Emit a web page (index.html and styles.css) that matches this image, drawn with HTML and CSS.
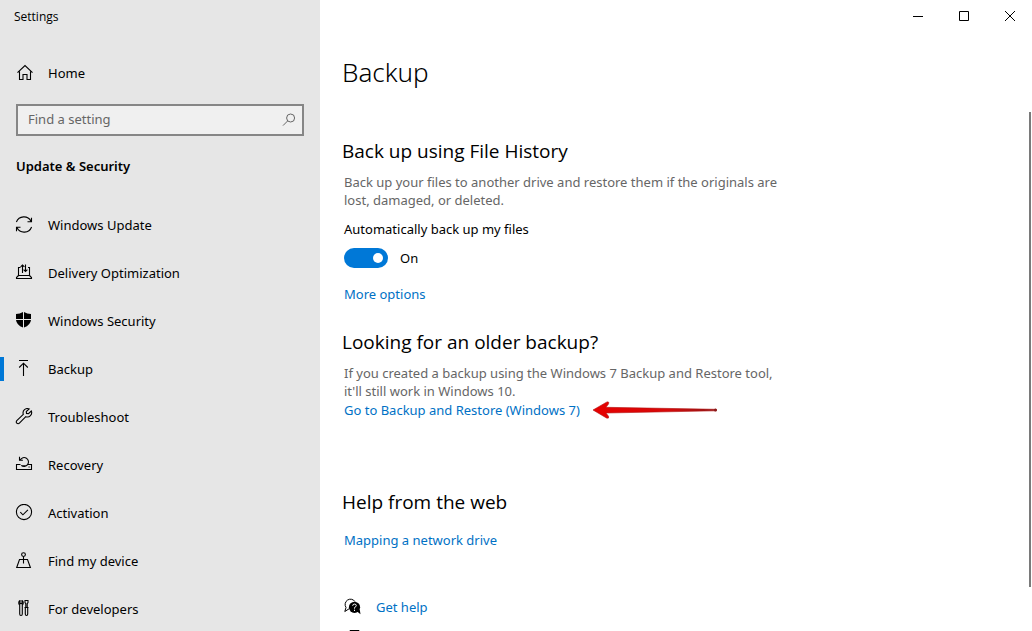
FILE: index.html
```html
<!DOCTYPE html>
<html lang="en">
<head>
<meta charset="utf-8">
<title>Settings</title>
<link rel="stylesheet" href="styles.css">
</head>
<body>
<div class="window">
  <aside class="sidebar">
    <div class="app-name">Settings</div>
    <a class="nav-item" href="#">
      <svg class="icon" viewBox="0 0 18 18"><path d="M2.500 8.700 10 1.500 17.500 8.700M4.500 7.500v8h3.500v-5h4v5h3.500v-8"/></svg>
      <span>Home</span>
    </a>
    <div class="search">
      <input class="search-input" type="text" placeholder="Find a setting" aria-label="Find a setting">
      <svg class="search-icon" viewBox="0 0 14 14"><circle cx="8.600" cy="5" r="4"/><path d="M5.700 7.900 1 12.600"/></svg>
    </div>
    <h2 class="category">Update &amp; Security</h2>
    <nav class="nav">
      <a class="nav-item" href="#">
        <svg class="icon" viewBox="0 0 18 18"><path d="M1.400 6A8 8 0 0 1 16 5.200M16.500 1.800v4h-4M16.600 11A8 8 0 0 1 2 11.800M1.500 15.200v-4h4"/></svg>
        <span>Windows Update</span>
      </a>
      <a class="nav-item" href="#">
        <svg class="icon" viewBox="0 0 18 18"><path d="M5.500 3.500h-2v8h11v-8h-1.500M3.500 11.500l-2 2v1h15v-1l-2-2M7.500 9V1M5.600 2.900l1.900-1.900 1.900 1.900M10.500 .5v7M8.600 5.600l1.900 1.900 1.900-1.900"/></svg>
        <span>Delivery Optimization</span>
      </a>
      <a class="nav-item" href="#">
        <svg class="icon" viewBox="0 0 18 18"><path class="solid" d="M8 0V7H1V2Q5 2 8 0zM9 0Q12 2 16 2v5H9zM1 8h7v7.600Q1.500 13 1 8zM9 8h7q-.5 5-7 7.600z"/></svg>
        <span>Windows Security</span>
      </a>
      <a class="nav-item current" href="#" aria-current="page">
        <svg class="icon" viewBox="0 0 18 18"><path d="M4 .5h9M8.500 16V3.500M4.200 7.500l4.300-4.300 4.300 4.300"/></svg>
        <span>Backup</span>
      </a>
      <a class="nav-item" href="#">
        <svg class="icon" viewBox="0 0 18 18"><path d="M14.200 1a4.300 4.300 0 0 0-5.900 5.300L1.800 12.600a1.800 1.800 0 0 0 2.600 2.600l6.400-6.500a4.300 4.300 0 0 0 5.500-5.700L13.500 5.700l-2-.3-.2-1.900z"/></svg>
        <span>Troubleshoot</span>
      </a>
      <a class="nav-item" href="#">
        <svg class="icon" viewBox="0 0 18 18"><path d="M5.500 8.500h-4v5h15v-5h-4M13.500 11h1.200M6.200 9.300A4.400 4.400 0 1 0 5.200 3.900M4.500 .8v3.400h3.400M7 9.800h4.500"/></svg>
        <span>Recovery</span>
      </a>
      <a class="nav-item" href="#">
        <svg class="icon" viewBox="0 0 18 18"><circle cx="9" cy="8" r="7.600"/><path d="M5.300 8.200l2.600 2.600 5-5"/></svg>
        <span>Activation</span>
      </a>
      <a class="nav-item" href="#">
        <svg class="icon" viewBox="0 0 18 18"><circle cx="8.500" cy="2.600" r="1.900"/><path d="M8.500 4.500v7M6.500 7.500h-2L1.700 15.500h13.700L12.500 7.500h-2M5 7.500h7"/></svg>
        <span>Find my device</span>
      </a>
      <a class="nav-item" href="#">
        <svg class="icon" viewBox="0 0 18 18"><path d="M5 .6v3h2v-3Q8.500 1.400 8.200 3.500 8 4.600 7.300 5v9q0 1.500-1.300 1.500T4.700 14V5Q4 4.600 3.800 3.500 3.500 1.400 5 .6zM10 .5h3v2l-.8 1.200V7.500h-1.400V3.700L10 2.500zM9.500 7.500h4M10.300 7.500V14q0 1.500 1.200 1.500t1.200-1.500V7.500"/></svg>
        <span>For developers</span>
      </a>
    </nav>
  </aside>

  <main class="main">
    <div class="titlebar">
      <button class="caption" type="button" aria-label="Minimize"><svg class="glyph" viewBox="0 0 12 12"><path d="M1 6.500h10"/></svg></button>
      <button class="caption" type="button" aria-label="Maximize"><svg class="glyph" viewBox="0 0 12 12"><path d="M1.500 1.500h9v9h-9z"/></svg></button>
      <button class="caption" type="button" aria-label="Close"><svg class="glyph" viewBox="0 0 12 12"><path d="M1 1l10 10M11 1L1 11"/></svg></button>
    </div>
    <h1 class="page-title">Backup</h1>
    <div class="viewport">
      <div class="content">
        <section class="section">
          <h2 class="heading">Back up using File History</h2>
          <p class="desc">Back up your files to another drive and restore them if the originals are lost, damaged, or deleted.</p>
          <label class="field-label" for="auto">Automatically back up my files</label>
          <div class="toggle-row">
            <input class="toggle" id="auto" type="checkbox" role="switch" checked>
            <span>On</span>
          </div>
          <a class="link" href="#">More options</a>
        </section>
        <section class="section older">
          <h2 class="heading">Looking for an older backup?</h2>
          <p class="desc">If you created a backup using the Windows 7 Backup and Restore tool, it'll still work in Windows 10.</p>
          <div class="restore-row">
            <a class="link" href="#">Go to Backup and Restore (Windows 7)</a>
            <svg class="arrow" viewBox="0 0 126 20">
              <defs><linearGradient id="shaft" x1="0" x2="1" y1="0" y2="0"><stop offset="0" stop-color="#e60000"/><stop offset=".6" stop-color="#d80808"/><stop offset="1" stop-color="#8a1a1a"/></linearGradient></defs>
              <path fill="url(#shaft)" stroke="#b01010" stroke-width=".6" d="M1 10 14.500 2.200Q17.500 1 16.500 4L14 7.300 124 9.300Q125.500 10 124 10.800L14 13 16.500 16.200Q17.500 19 14.500 18z"/>
              <circle cx="123.500" cy="10" r="1.500" fill="#8a1a1a"/>
            </svg>
          </div>
        </section>
        <section class="section web">
          <h2 class="heading">Help from the web</h2>
          <a class="link" href="#">Mapping a network drive</a>
        </section>
        <div class="help">
          <a class="help-item" href="#">
            <svg class="help-icon" viewBox="0 0 18 18"><path class="line" d="M5.500 10.500 .8 13.500 2 9.500A5 5 0 1 1 11 3.600"/><circle class="solid" cx="10.500" cy="9.300" r="5.600"/><path class="solid" d="M12.500 13l4 3.200-.8-5z"/><path class="mark" d="M8.700 7.800q0-1.700 1.800-1.700t1.800 1.500q0 1-1.800 2v1M10.500 11.700v1.300"/></svg>
            <span>Get help</span>
          </a>
          <a class="help-item" href="#" aria-label="Feedback">
            <svg class="help-icon" viewBox="0 0 18 18"><path class="line" d="M6 .5h9v6H6z"/></svg>
          </a>
        </div>
      </div>
      <div class="scrollbar"></div>
    </div>
  </main>
</div>
</body>
</html>
```
FILE: styles.css
```css
* { box-sizing: border-box; }
body {
  margin: 0;
  font: 13px/18px "Noto Sans", "Open Sans", sans-serif;
  color: #000;
  background: #fff;
}
h1, h2, p { margin: 0; font-weight: 400; }
a { text-decoration: none; }
.window { display: flex; height: 100vh; overflow: hidden; }

.sidebar { flex: 0 0 320px; background: #e6e6e6; overflow: hidden; }
.app-name { padding: 8px 14px 0; font-family: "Open Sans", sans-serif; font-size: 12px; height: 49px; }
.nav-item {
  display: flex;
  align-items: center;
  gap: 15px;
  height: 48px;
  padding-left: 15px;
  color: #000;
}
.icon { width: 18px; height: 18px; fill: none; stroke: #000; stroke-width: 1.1; }
.solid { fill: #000; stroke: none; }
.current { padding-left: 0; gap: 0; }
.current::before { content: ""; width: 4px; height: 24px; margin-right: 11px; background: #0078d7; }
.current .icon { margin-right: 15px; }
.search {
  display: flex;
  align-items: center;
  margin: 7px 16px 0;
  height: 32px;
  padding: 0 6px 0 10px;
  border: 2px solid #868686;
  background: #f0f0f0;
}
.search-input {
  flex: 1;
  min-width: 0;
  padding: 0 0 2px;
  border: 0;
  outline: 0;
  background: none;
  font: inherit;
}
.search-input::placeholder { color: #666; opacity: 1; }
.search-icon { width: 14px; height: 14px; fill: none; stroke: #666; }
.category { margin: 21px 16px 26px; font-size: 13px; line-height: 18px; font-weight: 600; }

.main { flex: 1; min-width: 0; display: flex; flex-direction: column; }
.titlebar { display: flex; justify-content: flex-end; height: 32px; }
.caption {
  display: grid;
  place-items: center;
  width: 46px;
  height: 32px;
  padding: 0 0 0 2px;
  border: 0;
  background: none;
}
.glyph { width: 12px; height: 12px; fill: none; stroke: #000; }
.page-title { padding: 22px 22px 0; font-size: 26px; line-height: 36px; font-weight: 300; }
.viewport { flex: 1; min-height: 0; display: flex; margin-top: 22px; overflow: hidden; }
.content { flex: 1; min-width: 0; padding: 25px 22px 0; }
.scrollbar { width: 2px; margin: 0 1px 44px 0; background: #7a7a7a; }
.section { max-width: 444px; padding-left: 2px; }
.heading { margin-left: -2px; font-family: "Open Sans", sans-serif; font-size: 19px; line-height: 28px; }
.desc { margin-top: 8px; color: #666; }
.field-label { display: block; margin-top: 11px; }
.toggle-row { display: flex; align-items: center; gap: 12px; margin: 10px 0 17px; height: 20px; }
.toggle {
  appearance: none;
  display: flex;
  align-items: center;
  width: 44px;
  height: 20px;
  margin: 0;
  padding: 0 5px;
  border-radius: 10px;
  background: #ccc;
}
.toggle::before { content: ""; width: 10px; height: 10px; border-radius: 50%; background: #fff; }
.toggle:checked { justify-content: flex-end; background: #0078d7; }
.link { color: #0071c5; }
.older { margin-top: 25px; }
.restore-row { display: flex; align-items: center; gap: 12px; }
.arrow { flex: none; width: 126px; height: 20px; }
.web { margin-top: 68px; }
.web .link { display: block; margin-top: 15px; }
.help { display: flex; flex-direction: column; margin-top: 42px; }
.help-item { display: flex; align-items: center; gap: 14px; height: 32px; padding-left: 2px; color: #0071c5; }
.help-icon { width: 18px; height: 18px; fill: none; }
.line { stroke: #000; }
.mark { stroke: #fff; }
```
